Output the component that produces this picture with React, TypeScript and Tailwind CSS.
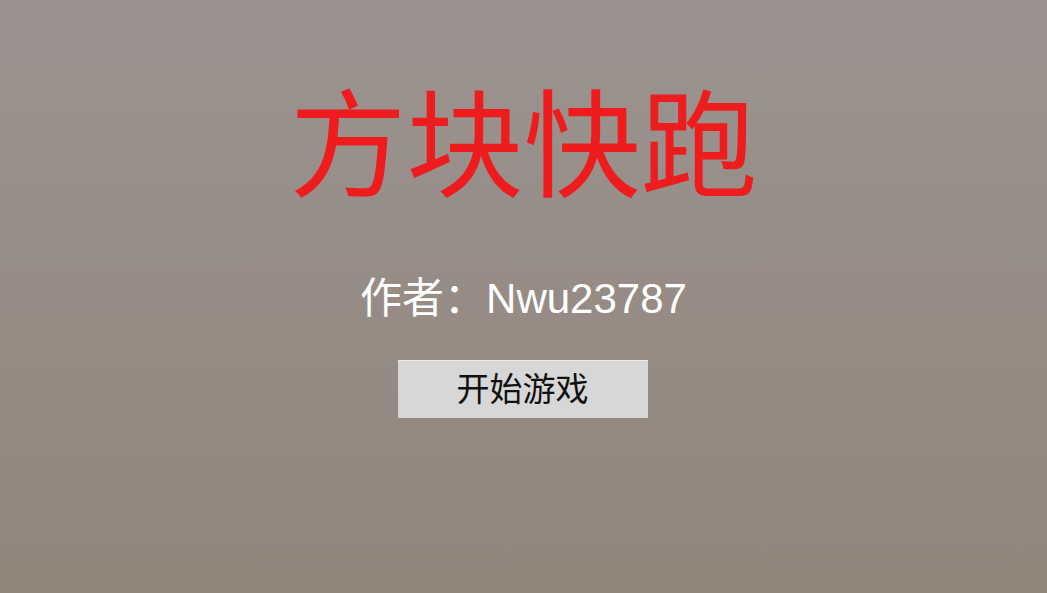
const App = () => {
  return (
    <div className="w-[1047px] h-[593px] overflow-hidden bg-gradient-to-b from-[#9c9391] to-[#91867a] font-['Liberation_Sans','Noto_Sans_CJK_SC',sans-serif]">
      <div className="flex flex-col items-center pt-[89px]">
        {/* Title */}
        <h1 className="text-[117px] leading-none text-[#ee1c1c] font-normal">
          方块快跑
        </h1>

        {/* Author */}
        <p className="mt-[72px] text-[42px] leading-none text-white">
          作者：Nwu23787
        </p>

        {/* Start */}
        <button className="mt-[40px] -ml-[2px] w-[250px] h-[58px] bg-[#d7d7d7] border-t border-[#ececec] text-[33px] leading-none text-[#111]">
          开始游戏
        </button>
      </div>
    </div>
  );
};

export default App;
